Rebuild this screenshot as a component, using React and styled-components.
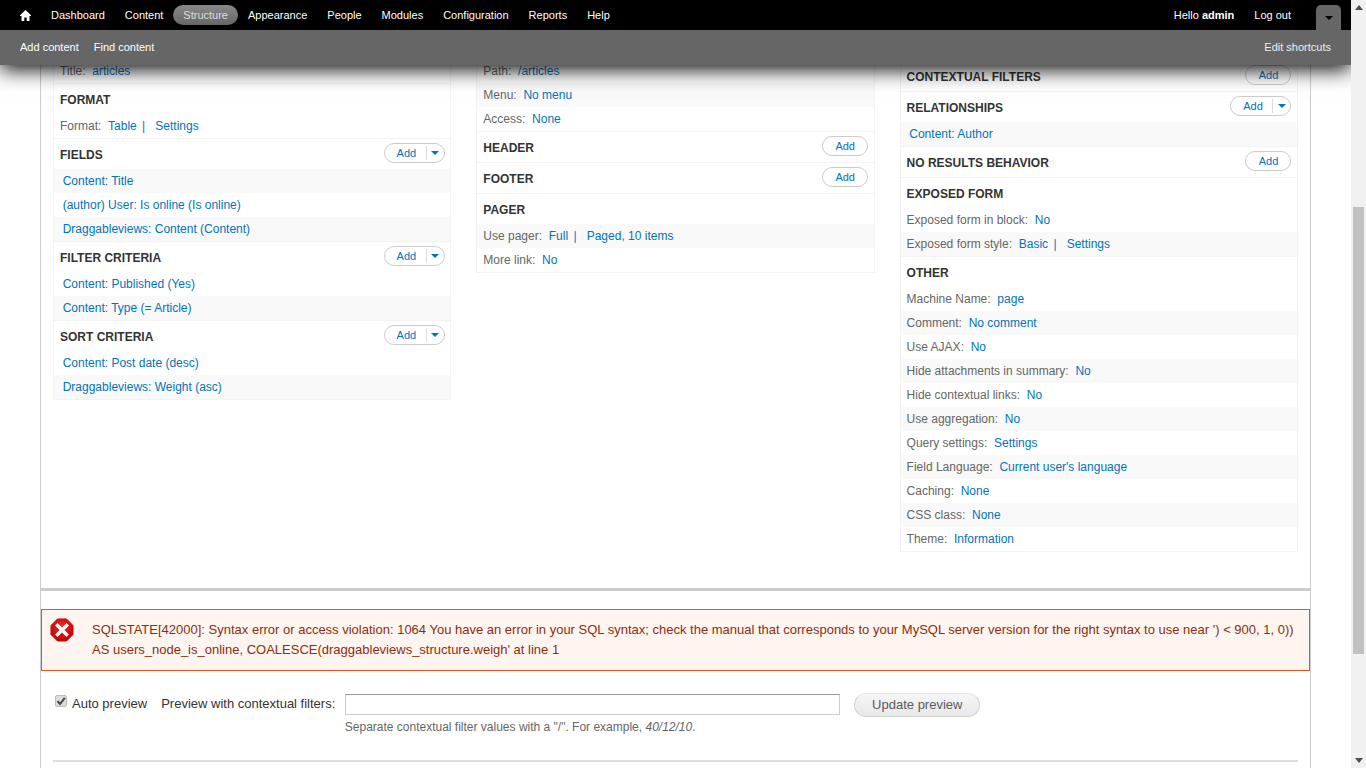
import React from "react";
import styled, { createGlobalStyle } from "styled-components";

const Global = createGlobalStyle`
  html, body { margin: 0; padding: 0; height: 100%; overflow: hidden; background: #fff; }
  body { font: 12px/1.5 "Liberation Sans", Arial, sans-serif; color: #333; }
  a { color: #0074bd; text-decoration: none; }
`;

const Page = styled.div`display: flex; height: 768px; overflow: hidden;`;
const Main = styled.main`position: relative; flex: 1; min-width: 0; height: 768px; overflow: hidden;`;

const Toolbar = styled.header`
  position: absolute; top: 0; left: 0; right: 0; z-index: 5;
  box-shadow: 0 4px 20px #000; background: #666;
`;
const MenuBar = styled.nav`
  height: 30px; background: #000; display: flex; align-items: flex-start; padding-left: 20px; box-sizing: border-box;
`;
const HomeLink = styled.a`display: flex; width: 11px; height: 11px; margin: 10px 10px 0 0;`;
const MenuLink = styled.a`
  height: 20px; line-height: 20px; margin-top: 5px; padding: 0 10px; border-radius: 10px; color: ${p => p.$active ? "#ddd" : "#fff"}; white-space: nowrap;
  font-size: 11px;
  background: ${p => p.$active ? "linear-gradient(#888, #666)" : "none"};
`;
const MenuSpacer = styled.div`flex: 1;`;
const Hello = styled.span`margin-top: 5px; line-height: 20px; font-size: 11px; color: #fff; white-space: nowrap; strong { font-weight: 700; }`;
const LogOut = styled.a`margin: 5px 0 0 20px; line-height: 20px; font-size: 11px; color: #fff;`;
const DrawerToggle = styled.button`
  width: 25px; height: 25px; margin: 5px 10px 0 25px; padding: 0; border: 0; border-radius: 5px 5px 0 0;
  background: #666; display: flex; align-items: center; justify-content: center;
`;
const Caret = styled.i`
  display: block; width: 0; height: 0; border-style: solid; border-width: 4px 4px 0; border-color: ${p => p.$color} transparent transparent;
`;
const ShortcutBar = styled.div`
  height: 35px; padding: 0 20px 1px; display: flex; align-items: center; gap: 15px; box-sizing: border-box;
`;
const ShortcutLink = styled.a`color: #fff; font-size: 11px; line-height: 34px; white-space: nowrap;`;
const ShortcutEdit = styled(ShortcutLink)`margin-left: auto; color: #eee;`;

const Frame = styled.div`
  margin: 0 40px; border-left: 1px solid #ccc; border-right: 1px solid #ccc; height: 768px;
`;
const Columns = styled.div`
  display: flex; justify-content: space-between; align-items: flex-start; padding: 58px 12px 36px; height: 494px;
`;
const Column = styled.div`
  width: 32%; margin-top: ${p => p.$top || 0}px; border: 1px solid #f3f3f3; box-sizing: border-box; background: #fff;
`;
const Section = styled.section`border-bottom: 1px solid #f3f3f3; &:last-child { border-bottom: 0; }`;
const Heading = styled.div`
  height: 30px; display: flex; justify-content: space-between; align-items: flex-start; padding: 0 5.5px 0 6px;
`;
const HeadingText = styled.h3`
  margin: 0; font-size: 12px; font-weight: 700; line-height: 32px; color: #333; text-transform: uppercase;
`;
const Row = styled.div`
  height: 24px; line-height: 24px; padding-left: ${p => p.$field ? 8.7 : 6}px; color: #666; white-space: nowrap;
  background: ${p => p.$shaded ? "#f9f9f9" : "#fff"};
`;
const ValueLink = styled.a`margin-left: 3.4px;`;
const Pipe = styled.span`margin: 0 3.4px 0 2px; color: #0074bd;`;

const AddButton = styled.div`
  height: 20px; margin-top: 4px; border: 1px solid #ccc; border-radius: 10px; box-sizing: border-box;
  display: flex; align-items: center; font-size: 11px; background: #fff; width: ${p => p.$menu ? 61 : 46}px;
`;
const AddLabel = styled.a`
  box-sizing: border-box; width: ${p => p.$menu ? 41 : 44}px; padding-left: ${p => p.$menu ? 2 : 0}px;
  text-align: center; line-height: 18px; font-size: 11px;
`;
const AddToggle = styled.span`
  flex: 1; height: 14px; border-left: 1px solid #ddd; display: flex; align-items: center; justify-content: center;
`;

const Divider = styled.div`height: 3px; background: #ccc;`;
const ErrorBox = styled.div`
  margin-top: 18px; height: 62px; box-sizing: border-box; border: 1px solid #ed541d; background: #fef5f1;
  color: #8c2e0b; font-size: 13px; line-height: 20px; padding: 10px 10px 10px 50px; position: relative;
`;
const ErrorIcon = styled.svg`position: absolute; left: 8px; top: 8px; width: 24px; height: 24px;`;
const PreviewForm = styled.form`
  display: flex; align-items: flex-start; margin-top: 22px; padding-left: 14px; font-size: 13px; color: #333;
`;
const CheckBox = styled.span`
  width: 10px; height: 10px; margin-top: 2px; border: 1px solid #bbb; border-radius: 2px; background: #ddd; display: flex;
`;
const FormLabel = styled.label`line-height: 20px; margin: 1px 0 0 ${p => p.$gap}px; white-space: nowrap;`;
const FieldWrap = styled.div`margin-left: 10px; width: 495px;`;
const TextField = styled.input`
  display: block; width: 100%; height: 21px; margin-top: 1px; padding: 0; box-sizing: border-box;
  border: 1px solid #ccc; border-top-color: #999; background: #fff;
`;
const Hint = styled.div`margin-top: 3px; margin-left: -0.5px; font-size: 12px; line-height: 18px; color: #666; white-space: nowrap;`;
const UpdateButton = styled.button`
  margin-left: 14px; width: 126px; height: 24px; border: 1px solid #d2d2d2; border-top-color: #e4e4e4; border-radius: 12px;
  background: linear-gradient(#f6f6f6, #e8e8e8); color: #5a5a5a; font: 13px "Liberation Sans", Arial, sans-serif; padding: 0 0 1px;
`;
const Rule = styled.div`height: 2px; margin: 24px 12px 0; background: #ddd;`;

const ScrollTrack = styled.aside`width: 15px; height: 768px; background: #f1f1f1; position: relative; flex: none;`;
const ScrollThumb = styled.div`width: 11px; height: 447px; margin: 207px 0 0 2px; background: #c1c1c1;`;
const ScrollArrow = styled.i`
  position: absolute; left: 4px; width: 0; height: 0; border-style: solid; border-color: transparent;
  ${p => p.$down
    ? "bottom: 5px; border-width: 5px 4px 0; border-top-color: #505050;"
    : "top: 5px; border-width: 0 4px 5px; border-bottom-color: #505050;"}
`;

const AddControl = ({ menu }) => (
  <AddButton $menu={menu}>
    <AddLabel $menu={menu} href="#">Add</AddLabel>
    {menu && <AddToggle><Caret $color="#0074bd" /></AddToggle>}
  </AddButton>
);

const SectionBlock = ({ title, add, rows = [], shadeFirst }) => (
  <Section>
    {title && (
      <Heading>
        <HeadingText>{title}</HeadingText>
        {add && <AddControl menu={add === "menu"} />}
      </Heading>
    )}
    {rows.map((r, i) => {
      const shaded = shadeFirst ? i % 2 === 0 : i % 2 === 1;
      if (typeof r === "string") {
        return <Row key={r} $field $shaded={shaded}><a href="#">{r}</a></Row>;
      }
      return (
        <Row key={r[0]} $shaded={shaded}>
          {r[0]}: <ValueLink href="#">{r[1]}</ValueLink>
          {r[2] && <> <Pipe>|</Pipe> <ValueLink href="#">{r[2]}</ValueLink></>}
          {r[3] && <>, <a href="#">{r[3]}</a></>}
        </Row>
      );
    })}
  </Section>
);

const menu = ["Dashboard", "Content", "Structure", "Appearance", "People", "Modules", "Configuration", "Reports", "Help"];

export default function App() {
  return (
    <Page>
      <Global />
      <Main>
        <Toolbar>
          <MenuBar>
            <HomeLink href="#" aria-label="Home">
              <svg width="11" height="11" viewBox="0 0 11 11"><path d="M5.5 0 L11 5.3 V6 H9.5 V11 H6.7 V7.5 H4.3 V11 H1.5 V6 H0 V5.3 Z" fill="#fff" /></svg>
            </HomeLink>
            {menu.map(m => <MenuLink key={m} href="#" $active={m === "Structure"}>{m}</MenuLink>)}
            <MenuSpacer />
            <Hello>Hello <strong>admin</strong></Hello>
            <LogOut href="#">Log out</LogOut>
            <DrawerToggle aria-label="Hide shortcuts"><Caret $color="#000" /></DrawerToggle>
          </MenuBar>
          <ShortcutBar>
            <ShortcutLink href="#">Add content</ShortcutLink>
            <ShortcutLink href="#">Find content</ShortcutLink>
            <ShortcutEdit href="#">Edit shortcuts</ShortcutEdit>
          </ShortcutBar>
        </Toolbar>
        <Frame>
          <Columns>
            <Column>
              <SectionBlock rows={[["Title", "articles"]]} />
              <SectionBlock title="Format" rows={[["Format", "Table", "Settings"]]} />
              <SectionBlock title="Fields" add="menu" shadeFirst rows={["Content: Title", "(author) User: Is online (Is online)", "Draggableviews: Content (Content)"]} />
              <SectionBlock title="Filter criteria" add="menu" rows={["Content: Published (Yes)", "Content: Type (= Article)"]} />
              <SectionBlock title="Sort criteria" add="menu" rows={["Content: Post date (desc)", "Draggableviews: Weight (asc)"]} />
            </Column>
            <Column>
              <SectionBlock rows={[["Path", "/articles"], ["Menu", "No menu"], ["Access", "None"]]} />
              <SectionBlock title="Header" add="plain" />
              <SectionBlock title="Footer" add="plain" />
              <SectionBlock title="Pager" shadeFirst rows={[["Use pager", "Full", "Paged", "10 items"], ["More link", "No"]]} />
            </Column>
            <Column $top={2}>
              <SectionBlock title="Contextual filters" add="plain" />
              <SectionBlock title="Relationships" add="menu" shadeFirst rows={["Content: Author"]} />
              <SectionBlock title="No results behavior" add="plain" />
              <SectionBlock title="Exposed form" rows={[["Exposed form in block", "No"], ["Exposed form style", "Basic", "Settings"]]} />
              <SectionBlock title="Other" rows={[
                ["Machine Name", "page"], ["Comment", "No comment"], ["Use AJAX", "No"],
                ["Hide attachments in summary", "No"], ["Hide contextual links", "No"], ["Use aggregation", "No"],
                ["Query settings", "Settings"], ["Field Language", "Current user's language"], ["Caching", "None"],
                ["CSS class", "None"], ["Theme", "Information"],
              ]} />
            </Column>
          </Columns>
          <Divider />
          <ErrorBox>
            <ErrorIcon viewBox="0 0 24 24">
              <defs>
                <radialGradient id="errorRed" cx="50%" cy="35%" r="70%">
                  <stop offset="0" stopColor="#f02a2a" />
                  <stop offset="1" stopColor="#b80000" />
                </radialGradient>
              </defs>
              <path d="M7.5 1 H16.5 L23 7.5 V16.5 L16.5 23 H7.5 L1 16.5 V7.5 Z" fill="url(#errorRed)" stroke="#c00" strokeLinejoin="round" />
              <path d="M7.5 7.5 L16.5 16.5 M16.5 7.5 L7.5 16.5" stroke="#fff" strokeWidth="3.4" strokeLinecap="square" />
            </ErrorIcon>
            SQLSTATE[42000]: Syntax error or access violation: 1064 You have an error in your SQL syntax; check the manual that corresponds to your MySQL server version for the right syntax to use near ') &lt; 900, 1, 0)) AS users_node_is_online, COALESCE(draggableviews_structure.weigh' at line 1
          </ErrorBox>
          <PreviewForm>
            <CheckBox>
              <svg width="10" height="10" viewBox="0 0 10 10"><path d="M1.5 5.2 L4 8 L8.8 1.8" fill="none" stroke="#444" strokeWidth="2" /></svg>
            </CheckBox>
            <FormLabel $gap={5}>Auto preview</FormLabel>
            <FormLabel $gap={14}>Preview with contextual filters:</FormLabel>
            <FieldWrap>
              <TextField type="text" />
              <Hint>Separate contextual filter values with a "/". For example, <em>40/12/10</em>.</Hint>
            </FieldWrap>
            <UpdateButton type="button">Update preview</UpdateButton>
          </PreviewForm>
          <Rule />
        </Frame>
      </Main>
      <ScrollTrack>
        <ScrollArrow />
        <ScrollThumb />
        <ScrollArrow $down />
      </ScrollTrack>
    </Page>
  );
}
